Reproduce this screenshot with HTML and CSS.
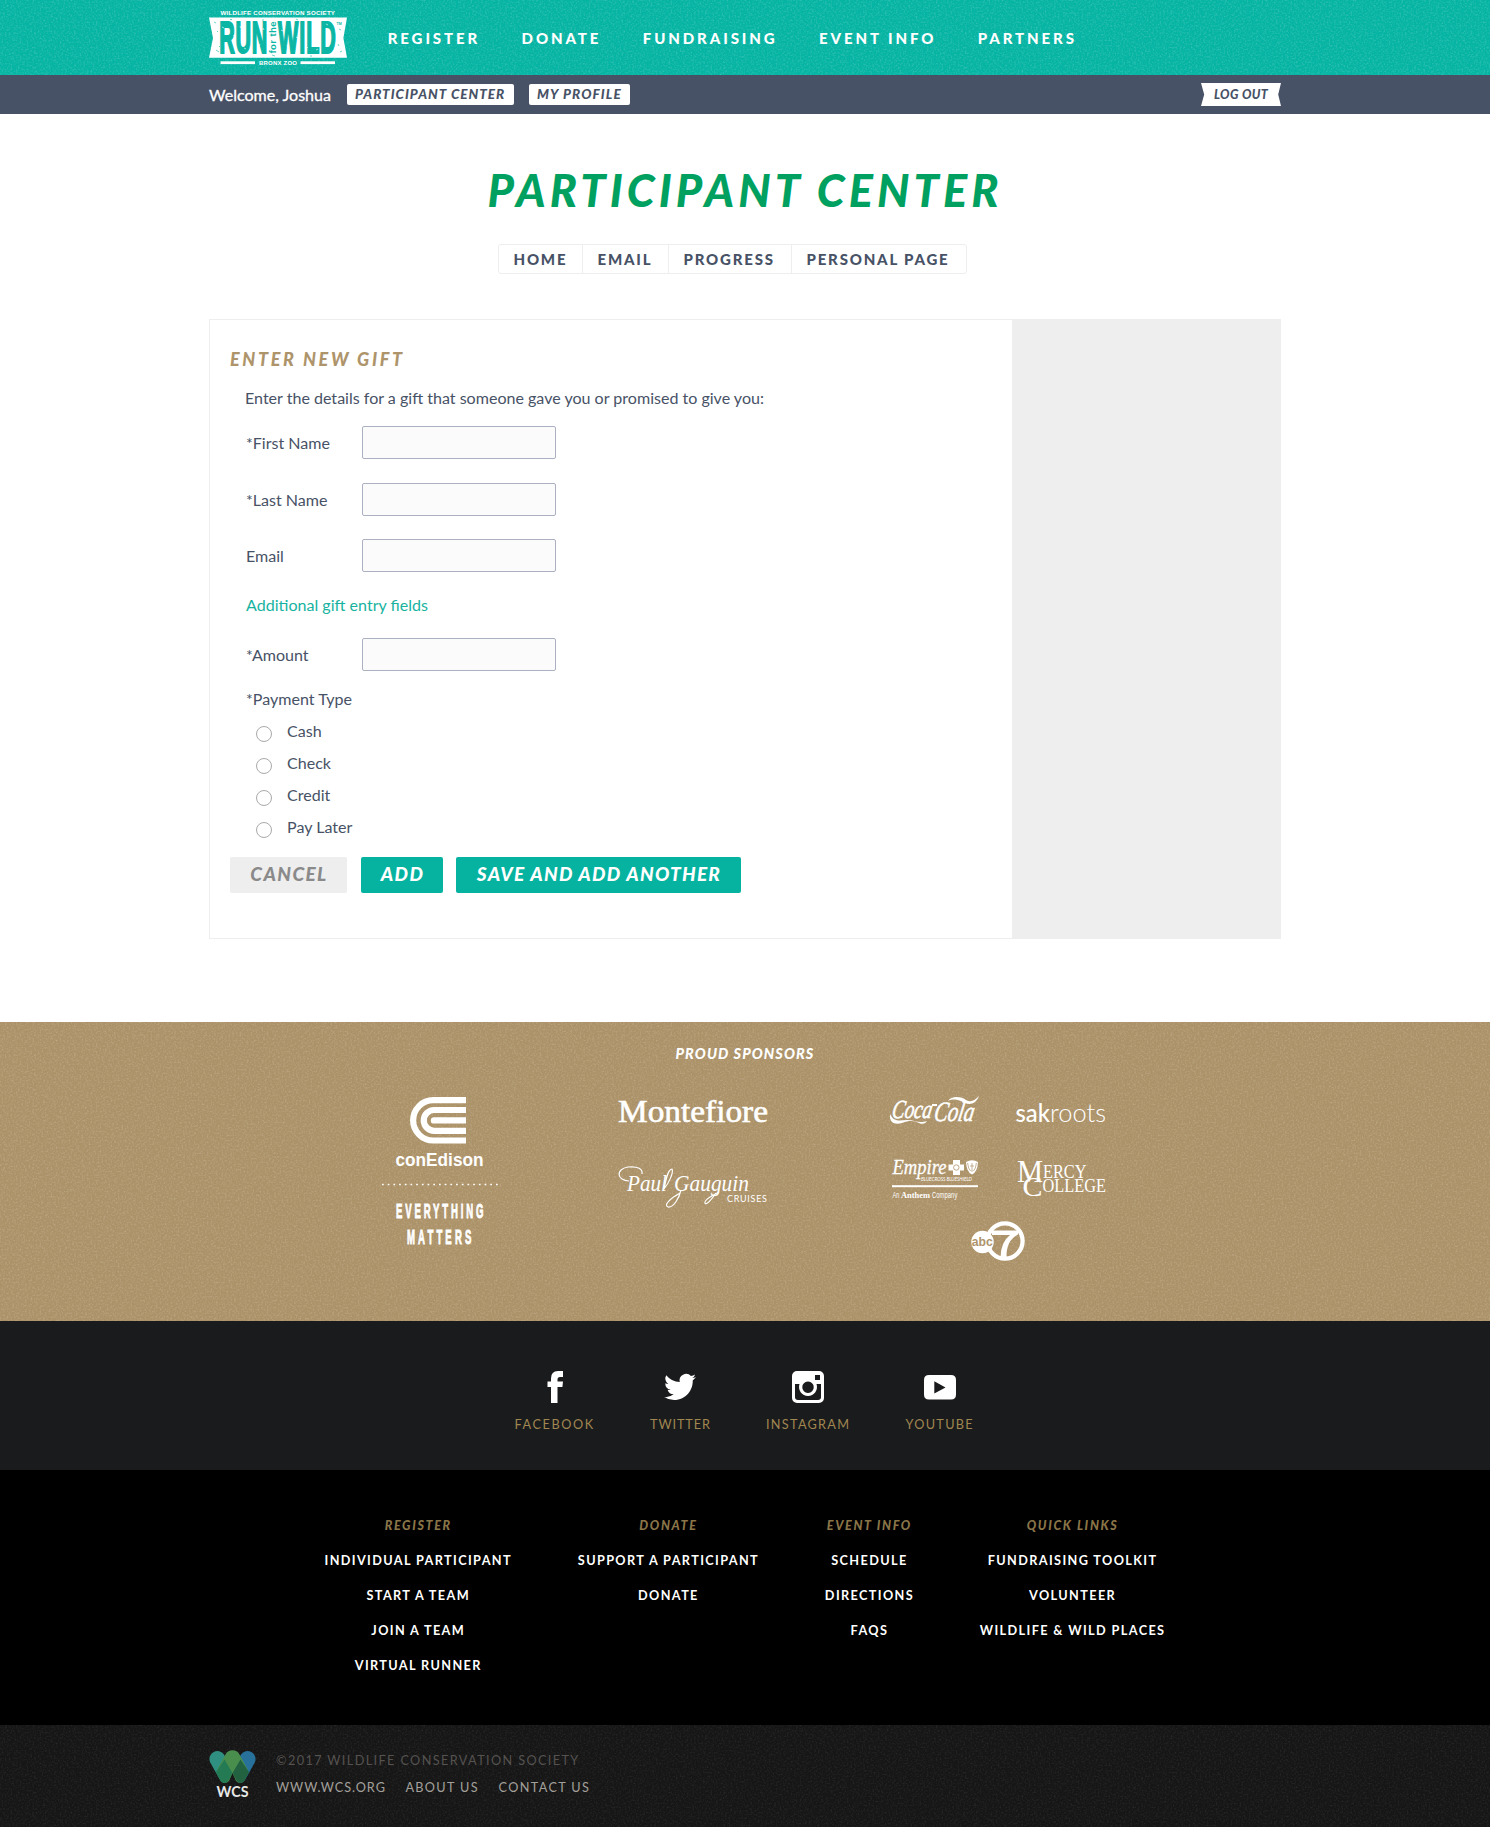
FILE: index.html
```html
<!DOCTYPE html>
<html lang="en">
<head>
<meta charset="utf-8">
<title>Participant Center</title>
<link rel="stylesheet" href="styles.css">
</head>
<body>
<header class="site-header grain-host">
  <svg class="grain" aria-hidden="true">
    <filter id="grain-light" x="0" y="0" width="100%" height="100%">
      <feTurbulence type="fractalNoise" baseFrequency="0.55" numOctaves="2" seed="4"/>
      <feColorMatrix values="0 0 0 0 1  0 0 0 0 1  0 0 0 0 1  1.6 0 0 0 -0.7"/>
    </filter>
    <rect width="100%" height="100%" filter="url(#grain-light)"/>
  </svg>
  <div class="wrap header-row">
    <svg class="logo" width="140" height="58" viewBox="208 9 140 58">
      <g fill="#fff">
        <text class="logo-small" x="220.5" y="15" font-size="6.2" textLength="114.5">WILDLIFE CONSERVATION SOCIETY</text>
        <path d="M209 17.5H347L343.4 38 347 57.7H209L213 38z"/>
        <rect x="220.5" y="61.3" width="34.5" height="2.8"/>
        <rect x="300.5" y="61.3" width="34.5" height="2.8"/>
        <text class="logo-small" x="259" y="65" font-size="6" textLength="38">BRONX ZOO</text>
      </g>
      <g fill="#0bb6a5">
        <g class="logo-big" stroke="#0bb6a5">
          <text transform="translate(219.3 53) scale(.49 1)" font-size="44" stroke-width="2" textLength="98">RUN</text>
          <text transform="translate(278 53) scale(.49 1)" font-size="44" stroke-width="2" textLength="118">WILD</text>
        </g>
        <text class="logo-small" transform="translate(275.6 53.5) rotate(-90)" font-size="9.5" textLength="32">for the</text>
        <text class="logo-small" x="336.5" y="24.5" font-size="3.6">TM</text>
      </g>
      <path d="M222 27l2 1M225 44l1 2M233 36l2-1M240 26l1 2M244 48l2 1M251 33l1 2M259 46l1-2M263 28l1 2M281 30l2 1M287 45l1 2M296 37l2 1M305 28l1 2M307 47l1 1M316 50l2-1M326 24l2 1M328 45l1 2" stroke="#fff" stroke-width="1" opacity=".6"/>
      <path d="M214 22l2 1M217 31l1 1M216 50l3 2M219 46l1 1M339 29l2 1M338 44l1 2M340 52l2-1M230 19.5l2 0M262 20l2 0M296 19l2 1M272 55l3 1M310 56l2 0" stroke="#0bb6a5" stroke-width="1" opacity=".6"/>
    </svg>
    <nav class="main-nav">
      <a>REGISTER</a><a>DONATE</a><a>FUNDRAISING</a><a>EVENT INFO</a><a>PARTNERS</a>
    </nav>
  </div>
</header>

<div class="user-bar">
  <div class="wrap user-row">
    <span class="welcome">Welcome, Joshua</span>
    <a class="chip chip-center">PARTICIPANT CENTER</a>
    <a class="chip chip-profile">MY PROFILE</a>
    <a class="logout">LOG OUT</a>
  </div>
</div>

<main class="wrap">
  <h1>PARTICIPANT CENTER</h1>
  <nav class="tabs"><a>HOME</a><a>EMAIL</a><a>PROGRESS</a><a>PERSONAL PAGE</a></nav>
  <section class="card">
    <form class="gift">
      <h2>ENTER NEW GIFT</h2>
      <div class="fields">
        <p class="intro">Enter the details for a gift that someone gave you or promised to give you:</p>
        <label class="row"><span>*First Name</span><input type="text"></label>
        <label class="row"><span>*Last Name</span><input type="text"></label>
        <label class="row email"><span>Email</span><input type="text"></label>
        <a class="more">Additional gift entry fields</a>
        <label class="row amount"><span>*Amount</span><input type="text"></label>
        <p class="pay-title">*Payment Type</p>
        <label class="pay"><input type="radio" name="pay"><span>Cash</span></label>
        <label class="pay"><input type="radio" name="pay"><span>Check</span></label>
        <label class="pay"><input type="radio" name="pay"><span>Credit</span></label>
        <label class="pay"><input type="radio" name="pay"><span>Pay Later</span></label>
      </div>
      <div class="actions">
        <button type="button" class="btn btn-cancel">CANCEL</button>
        <button type="button" class="btn btn-add">ADD</button>
        <button type="button" class="btn btn-save">SAVE AND ADD ANOTHER</button>
      </div>
    </form>
    <aside class="side"></aside>
  </section>
</main>

<section class="sponsors grain-host">
  <svg class="grain" aria-hidden="true"><rect width="100%" height="100%" filter="url(#grain-light)"/></svg>
  <h3>PROUD SPONSORS</h3>
  <div class="sponsor-cols">
    <svg width="120" height="155" viewBox="380 1095 120 155" fill="#fff">
      <g fill="none" stroke="#fff" stroke-width="6.2">
        <path d="M466 1100.2H433.3a20.1 20.1 0 0 0 0 40.3H466"/>
        <path d="M466 1110H434.2a10.4 10.4 0 0 0 0 20.8H466"/>
      </g>
      <path d="M466 1117.2H434a3.2 3.2 0 0 0 0 6.4H466z"/>
      <text class="sans-bold" x="395.5" y="1165.5" font-size="17.5" textLength="88" lengthAdjust="spacingAndGlyphs">conEdison</text>
      <path d="M382 1184.5H498" stroke="#fff" stroke-width="1.7" stroke-dasharray="1.7 4"/>
      <g class="sans-bold" font-size="20" stroke="#fff" stroke-width=".9">
        <text transform="translate(396 1218) scale(.48 1)" textLength="182">EVERYTHING</text>
        <text transform="translate(407 1244) scale(.48 1)" textLength="134">MATTERS</text>
      </g>
    </svg>
    <div class="sponsor-mid">
      <svg width="152" height="34" viewBox="617 1093 152 34" fill="#fff">
        <text class="serif" x="618" y="1121.5" font-size="32" stroke="#fff" stroke-width=".6" textLength="150" lengthAdjust="spacingAndGlyphs">Montefiore</text>
      </svg>
      <svg width="152" height="44" viewBox="617 1165 152 44" fill="#fff">
        <g class="script">
          <text x="627" y="1190.5" font-size="24" textLength="40" lengthAdjust="spacingAndGlyphs">Paul</text>
          <text x="674" y="1190.5" font-size="24" textLength="75" lengthAdjust="spacingAndGlyphs">Gauguin</text>
        </g>
        <path d="M629 1181c-12 0-14-12-1-14 10-1 15 2 14 7M664 1189c4-5 10-16 8-20-4 0-6 10-8 20M681 1190c-2 9-8 18-13 17-5-2 3-9 12-14M716 1193c-4 6-10 13-11 10-1-3 8-8 14-11" fill="none" stroke="#fff" stroke-width="1.2"/>
        <text class="thin" x="727" y="1201.5" font-size="9" textLength="40">CRUISES</text>
      </svg>
    </div>
    <div class="sponsor-right">
      <svg width="90" height="30" viewBox="890 1096 90 30" fill="#fff">
        <g class="script" stroke="#fff" stroke-width=".6">
          <text transform="translate(891 1118) skewX(-10)" font-size="26" textLength="40" lengthAdjust="spacingAndGlyphs">Coca</text>
          <text transform="translate(933 1121) skewX(-10)" font-size="28" textLength="40" lengthAdjust="spacingAndGlyphs">Cola</text>
        </g>
        <path d="M890 1114c-1 9 5 11 12 9 8-3 13-2 17 0 4 2 7 0 8-2-8 3-12-1-20-1-6 0-13 3-17-6z"/>
        <path d="M948 1101c4-6 14-4 18-1 5 3 9 0 13-4-3 8-9 9-14 7-6-3-11-5-17-2z"/>
        <path d="M932 1104h5v2h-5z"/>
      </svg>
      <svg width="92" height="30" viewBox="1015 1096 92 30" fill="#fff">
        <text class="sak" x="1015.5" y="1122" font-size="25" textLength="34.500" lengthAdjust="spacingAndGlyphs">sak</text>
        <text class="roots" x="1050" y="1122" font-size="25" textLength="56" lengthAdjust="spacingAndGlyphs">roots</text>
      </svg>
      <svg width="90" height="42" viewBox="890 1158 90 42" fill="#fff">
        <text class="script" x="892.5" y="1174" font-size="22" stroke="#fff" stroke-width=".3" textLength="54" lengthAdjust="spacingAndGlyphs">Empire</text>
        <path d="M953 1160h7v4.500h4v6h-4v4.500h-7v-4.500h-4.500v-6h4.500z"/>
        <path d="M966 1162q6-3.500 12 0-.5 10-6 12.500-5.500-2.500-6-12.500z"/>
        <circle cx="956.300" cy="1167.500" r="2.700" fill="none" stroke="#ae946b" stroke-width=".8"/>
        <path d="M972 1163v9M970 1166h4M967.600 1163q.6 6 3 8M976.400 1163q-.6 6-3 8" fill="none" stroke="#ae946b" stroke-width=".7"/>
        <text class="thin-i" x="921" y="1180.800" font-size="4.800" textLength="51">BLUECROSS BLUESHIELD</text>
        <rect x="892" y="1185.200" width="86" height="2"/>
        <text transform="translate(892.500 1197.500) scale(.65 1)" class="sans" font-size="8.500" textLength="10.500">An</text>
        <text class="serif-b" x="901" y="1197.500" font-size="8.500" textLength="29" lengthAdjust="spacingAndGlyphs">Anthem</text>
        <text transform="translate(932 1197.500) scale(.65 1)" class="sans" font-size="9" textLength="39">Company</text>
      </svg>
      <svg width="92" height="42" viewBox="1015 1158 92 42" fill="#fff">
        <g class="serif">
          <text x="1017" y="1182" font-size="32" textLength="26" lengthAdjust="spacingAndGlyphs">M</text>
          <text x="1043" y="1177.500" font-size="19.500" textLength="43.500" lengthAdjust="spacingAndGlyphs">ERCY</text>
          <text x="1042.500" y="1191.500" font-size="18" textLength="63.500" lengthAdjust="spacingAndGlyphs">OLLEGE</text>
          <text x="1022.500" y="1196" font-size="27" textLength="20" lengthAdjust="spacingAndGlyphs">C</text>
        </g>
      </svg>
      <svg class="abc" width="56" height="42" viewBox="970 1220 56 42">
        <circle cx="1005" cy="1241" r="17.600" fill="none" stroke="#fff" stroke-width="4.300"/>
        <circle cx="982.500" cy="1242" r="11.200" fill="#fff"/>
        <path d="M992 1230.500h26v4q-12 6-11.500 23h-6q0-15 9.500-22.500h-18z" fill="#fff"/>
        <text class="sans-bold" x="971.800" y="1246" font-size="12" fill="#ae946b" textLength="21" lengthAdjust="spacingAndGlyphs">abc</text>
      </svg>
    </div>
  </div>
</section>

<section class="social">
  <a><svg width="32" height="32" viewBox="0 0 32 32"><path d="M24 0v6h-3q-2.500 0-2.500 2.500V10.500H24l-.6 5.500h-4.900V32H12V16H8.500v-5.500H12V7.500Q12 0 19 0z"/></svg><span>FACEBOOK</span></a>
  <a><svg width="32" height="32" viewBox="0 0 24 24"><path d="M24 4.560a9.800 9.800 0 0 1-2.830.780 4.940 4.940 0 0 0 2.170-2.730 9.860 9.860 0 0 1-3.130 1.200 4.920 4.920 0 0 0-8.390 4.490A13.980 13.980 0 0 1 1.670 3.150a4.930 4.930 0 0 0 1.520 6.570 4.900 4.900 0 0 1-2.230-.610 4.930 4.930 0 0 0 3.950 4.890 4.930 4.930 0 0 1-2.220.080 4.930 4.930 0 0 0 4.600 3.420A9.900 9.900 0 0 1 0 19.540a13.940 13.940 0 0 0 7.550 2.210c9.140 0 14.310-7.720 13.990-14.640A10 10 0 0 0 24 4.560z"/></svg><span>TWITTER</span></a>
  <a><svg width="32" height="32" viewBox="0 0 32 32"><path fill-rule="evenodd" d="M5 0h22a5 5 0 0 1 5 5v22a5 5 0 0 1-5 5H5a5 5 0 0 1-5-5V5a5 5 0 0 1 5-5zM23 4v5h5V4zM3 13v13q0 3 3 3h20q3 0 3-3V13h-4.500a9 9 0 1 1-17 0zM16 10.500a5.700 5.700 0 1 0 .01 0z"/></svg><span>INSTAGRAM</span></a>
  <a><svg width="32" height="32" viewBox="0 0 32 32"><path fill-rule="evenodd" d="M5 4h22q5 0 5 5v14.500q0 5-5 5H5q-5 0-5-5V9q0-5 5-5zM10.300 10.300v12.200L21.500 16.400z"/></svg><span>YOUTUBE</span></a>
</section>

<footer>
  <div class="links">
    <div><h4>REGISTER</h4><a>INDIVIDUAL PARTICIPANT</a><a>START A TEAM</a><a>JOIN A TEAM</a><a>VIRTUAL RUNNER</a></div>
    <div><h4>DONATE</h4><a>SUPPORT A PARTICIPANT</a><a>DONATE</a></div>
    <div><h4>EVENT INFO</h4><a>SCHEDULE</a><a>DIRECTIONS</a><a>FAQS</a></div>
    <div><h4>QUICK LINKS</h4><a>FUNDRAISING TOOLKIT</a><a>VOLUNTEER</a><a>WILDLIFE &amp; WILD PLACES</a></div>
  </div>
  <div class="legal grain-host">
    <svg class="grain grain-dark" aria-hidden="true"><rect width="100%" height="100%" filter="url(#grain-light)"/></svg>
    <div class="wrap legal-row">
      <svg width="47" height="48" viewBox="0 0 47 48">
        <path fill="#2f8f80" d="M1 12A8 8 0 0 1 15 4.500L23.500 20 19 30q-4 6-8 0z"/>
        <path fill="#27719a" d="M46 12A8 8 0 0 0 32 4.500L23.500 20 28 30q4 6 8 0z"/>
        <path fill="#4a8e4e" d="M16.500 4.500a8 8 0 0 1 14 0L39 20 35 31q-4 4-8 0L23.500 23 20 31q-4 4-8 0L8 20z"/>
        <path fill="#247a53" d="M15.500 9.500L23.500 23 19.500 30.500q-4 5-8 0L7 22z"/>
        <path fill="#226240" d="M31.500 9.500L40 22 35.500 30.500q-4 5-8 0L23.500 23z"/>
        <text class="wcs" x="7.500" y="47" textLength="32" lengthAdjust="spacingAndGlyphs">WCS</text>
      </svg>
      <div class="legal-text">
        <p>©2017 WILDLIFE CONSERVATION SOCIETY</p>
        <p class="legal-links"><a>WWW.WCS.ORG</a><a>ABOUT US</a><a>CONTACT US</a></p>
      </div>
    </div>
  </div>
</footer>
</body>
</html>
```
FILE: styles.css
```css
* { box-sizing: border-box; }
body { margin: 0; background: #fff; color: #475266; font: 16.06px/24px Lato, sans-serif; }
h1, h2, h3, h4, p { margin: 0; }
svg { display: block; flex: none; overflow: visible; }
.wrap { width: 1072px; margin: 0 auto; }

.grain-host { position: relative; }
.grain { position: absolute; inset: 0; width: 100%; height: 100%; opacity: .24; overflow: hidden; }
.grain-dark { opacity: .1; }
.grain-host > :not(.grain) { position: relative; }

/* header */
.site-header { height: 75px; background: #06b4a3; }
.header-row { display: flex; height: 75px; }
.logo { margin: 9px 0 0 -1px; }
.main-nav { display: flex; gap: 41.5px; margin: 1px 0 0 39.7px; line-height: 75px; font-size: 15px; font-weight: 900; letter-spacing: 2.9px; color: #fff; }
.logo-small { font-family: "Liberation Sans", sans-serif; font-weight: 700; }
.logo-big { font-family: "Liberation Sans", sans-serif; font-weight: 700; }

/* user bar */
.user-bar { height: 39px; background: #485266; }
.user-row { display: flex; align-items: center; height: 39px; }
.welcome { width: 138px; color: #fff; -webkit-text-stroke: .3px #fff; }
.chip { height: 21px; line-height: 20px; margin-right: 15px; padding-left: 8px; background: #fff; border-radius: 2px; font-size: 13.5px; font-weight: 900; font-style: italic; letter-spacing: 1px; white-space: nowrap; }
.chip-center { width: 167px; }
.chip-profile { width: 101px; letter-spacing: 1.1px; }
.logout { margin-left: auto; width: 80px; height: 23px; padding-left: 13px; line-height: 23px; background: #fff; clip-path: polygon(0 0, 100% 0, 96.5% 50%, 100% 100%, 0 100%, 4% 50%); font-size: 12.5px; font-weight: 900; font-style: italic; letter-spacing: .4px; }

/* page title and tabs */
h1 { margin-top: 51px; text-align: center; color: #00a160; font-size: 45px; line-height: 50px; font-weight: 900; font-style: italic; letter-spacing: 4.14px; }
.tabs { display: grid; grid-template-columns: 83px 86px 123px 175px; width: 469px; height: 30px; margin: 29px 0 0 289px; border: 1px solid #eee; border-radius: 3px; font-size: 15px; line-height: 28px; font-weight: 900; letter-spacing: 1.8px; }
.tabs a { padding-left: 14.5px; border-left: 1px solid #eee; white-space: nowrap; }
.tabs a:first-child { border-left: 0; }

/* gift card */
.card { display: grid; grid-template-columns: 802px 268px; width: 1072px; height: 620px; margin: 45px 0 83px; border: 1px solid #eee; }
.side { background: #eee; }
.gift { padding: 27px 0 0 20px; }
h2 { margin-bottom: 15px; color: #ae946b; font-size: 18px; line-height: 24px; font-weight: 900; font-style: italic; letter-spacing: 2.65px; }
.fields { padding-left: 16px; }
.intro { margin: 0 0 16px -1px; }
.row { display: flex; align-items: center; height: 33px; margin-bottom: 24px; }
.row span { width: 116px; }
.row input { width: 194px; height: 33px; border: 1px solid #abb0c2; border-radius: 2px; background: #fbfbfb; }
.row:nth-of-type(2) { margin-bottom: 23px; }
.row.email { margin-bottom: 21px; }
.more { display: block; margin-bottom: 21px; color: #17b39f; }
.row.amount { margin-bottom: 16px; }
.pay-title { margin-bottom: 4px; }
.pay { display: flex; height: 32px; line-height: 32px; }
.pay input { appearance: none; width: 16px; height: 16px; margin: 11px 15px 0 10px; border: 1px solid #a9a9a9; border-radius: 50%; background: #fff; }
.actions { display: flex; margin-top: 14px; }
.btn { height: 36px; padding: 0 0 2px; border: 0; border-radius: 2px; background: #05b3a0; color: #fff; font: italic 900 19px/34px Lato, sans-serif; text-indent: 1px; letter-spacing: 1.25px; }
.btn-cancel { width: 117px; margin-right: 14px; background: #eee; color: #8a8a8a; letter-spacing: 1.4px; }
.btn-add { width: 82px; margin-right: 13px; letter-spacing: 1.4px; }
.btn-save { width: 285px; }

/* sponsors */
.sponsors { height: 299px; padding-top: 22px; background: #ac9268; color: #fff; }
h3 { text-align: center; font-size: 14.5px; line-height: 20px; font-weight: 900; font-style: italic; letter-spacing: 1.08px; }
.sponsor-cols { display: flex; align-items: flex-start; margin: 29px 0 0 380px; }
.sponsors svg text { fill: currentColor; }
.sponsor-cols > svg { margin: 2px 117px 0 0; }
.sponsor-mid { display: grid; row-gap: 38px; margin-right: 121px; }
.sponsor-right { display: grid; grid-template-columns: 90px 92px; column-gap: 35px; padding-top: 3px; }
.sponsor-right svg { margin-bottom: 32px; }
.sponsor-right svg:nth-child(n+3) { margin-bottom: 20px; }
.sponsor-right .abc { grid-column: 1 / 3; margin-left: 80px; }
.sponsors .abc text { fill: #ae946b; }
.sans { font-family: "Liberation Sans", sans-serif; }
.sans-bold { font-family: "Liberation Sans", sans-serif; font-weight: 700; }
.serif { font-family: "Liberation Serif", serif; }
.serif-b { font-family: "Liberation Serif", serif; font-weight: 700; }
.script { font-family: "Liberation Serif", serif; font-style: italic; }
.thin { font-family: Lato, sans-serif; font-weight: 400; }
.thin-i { font-family: Lato, sans-serif; font-style: italic; }
.sak { font-family: Lato, sans-serif; font-weight: 500; }
.roots { font-family: Lato, sans-serif; font-weight: 300; }

/* social */
.social { display: flex; height: 149px; padding: 50px 0 0 514.5px; gap: 55.2px; background: #1a1b1d; color: #a08650; font-size: 12.7px; line-height: 20px; letter-spacing: 1.3px; }
.social a { display: flex; flex-direction: column; align-items: center; gap: 11px; }
.social svg { fill: #fff; }
.social a:nth-child(1) { letter-spacing: 1.6px; }
.social a:nth-child(2) { letter-spacing: .9px; }

/* footer */
.links { display: flex; gap: 65.8px; height: 255px; padding: 38px 0 0 324.5px; background: #000; color: #fff; font-size: 12.7px; line-height: 35px; font-weight: 700; letter-spacing: 1.37px; text-align: center; }
.links a { display: block; }
h4 { color: #8a7548; font-size: 12.5px; line-height: 35px; font-weight: 900; font-style: italic; letter-spacing: 1.65px; }
.legal { height: 102px; background: #161616; }
.legal-row { display: flex; padding-top: 22px; }
.legal-row > svg { margin-top: 3px; }
.wcs { fill: #e8e8e8; font: 700 14.5px Lato, sans-serif; }
.legal-text { margin-left: 20px; font-size: 12.7px; line-height: 27px; letter-spacing: 1.38px; color: #555250; }
.legal-links { display: flex; gap: 19.5px; color: #a3a09b; }
.legal-links a { letter-spacing: 1.35px; }
.legal-links a:first-child { letter-spacing: .95px; }
```
